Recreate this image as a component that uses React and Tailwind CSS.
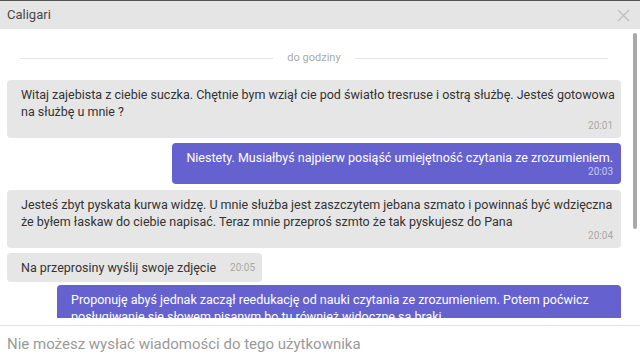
import React from "react";

function Bubble({ mine, time, children, className = "" }) {
  return (
    <div
      className={`rounded-[4px] pl-[14px] pt-[6px] pb-[6px] ${
        mine ? "bg-[#6562cf] text-white pr-[8px]" : "bg-[#e6e6e6] text-[#333] pr-[5px]"
      } ${className}`}
    >
      <div className="text-[12.5px] leading-[17px]">{children}</div>
      {time && (
        <div
          className={`text-right text-[10px] leading-[12px] ${
            mine ? "text-[#c9c8f0]" : "text-[#a8a8a8] mr-[3px]"
          }`}
        >
          {time}
        </div>
      )}
    </div>
  );
}

export default function App() {
  return (
    <div
      className="w-[640px] h-[355px] bg-white flex flex-col overflow-hidden"
      style={{ fontFamily: "Roboto, 'Noto Sans', sans-serif" }}
    >
      <div className="h-[29px] shrink-0 border-t border-[#555] bg-[#e5e5e5] flex items-center justify-between pl-[7px] pr-[10px]">
        <span className="text-[13px] text-[#4a4a4a]">Caligari</span>
        <svg width="13" height="13" viewBox="0 0 13 13" className="text-[#bdbdbd]">
          <path d="M1 1 L12 12 M12 1 L1 12" stroke="currentColor" strokeWidth="1.2" fill="none" />
        </svg>
      </div>

      <div className="flex h-[289px] shrink-0">
        <div className="flex-1 overflow-hidden pl-[7px]">
          <div className="flex items-center gap-[14px] mx-[13px] mt-[22px] mb-[15px] h-[14px]">
            <div className="flex-1 h-px bg-[#e6e6e6]" />
            <span className="text-[11px] text-[#aaa]">do godziny</span>
            <div className="flex-1 h-px bg-[#e6e6e6]" />
          </div>
          <div className="flex flex-col gap-[5px]">
            <Bubble time="20:01">
              Witaj zajebista z ciebie suczka. Chętnie bym wziął cie pod światło tresruse i ostrą służbę. Jesteś gotowowa na służbę u mnie ?
            </Bubble>
            <div className="flex justify-end">
              <Bubble mine time="20:03">
                Niestety. Musiałbyś najpierw posiąść umiejętność czytania ze zrozumieniem.
              </Bubble>
            </div>
            <Bubble time="20:04" className="mt-px">
              Jesteś zbyt pyskata kurwa widzę. U mnie służba jest zaszczytem jebana szmato i powinnaś być wdzięczna że byłem łaskaw do ciebie napisać. Teraz mnie przeproś szmto że tak pyskujesz do Pana
            </Bubble>
            <div className="flex">
              <div className="rounded-[4px] bg-[#e6e6e6] pl-[14px] pr-[7px] py-[6px] flex items-end">
                <span className="text-[12.5px] leading-[17px] text-[#333]">Na przeprosiny wyślij swoje zdjęcie</span>
                <span className="ml-[14px] text-[10px] leading-[16px] text-[#a8a8a8]">20:05</span>
              </div>
            </div>
            <div className="flex justify-end -mt-[2px] pl-[50px]">
              <Bubble mine>
                Proponuję abyś jednak zaczął reedukację od nauki czytania ze zrozumieniem. Potem poćwicz posługiwanie się słowem pisanym bo tu również widoczne są braki
              </Bubble>
            </div>
          </div>
        </div>
        <div className="w-[19px] shrink-0 pl-[12px] pt-[4px]">
          <div className="w-[4px] h-[196px] rounded-full bg-[#a9a9a9]" />
        </div>
      </div>

      <div className="h-[7px] shrink-0" />
      <div className="flex-1 border-t border-[#e3e3e3] pl-[7px] pt-[6px]">
        <span className="text-[15px] text-[#9a9a9a]">Nie możesz wysłać wiadomości do tego użytkownika</span>
      </div>
    </div>
  );
}
